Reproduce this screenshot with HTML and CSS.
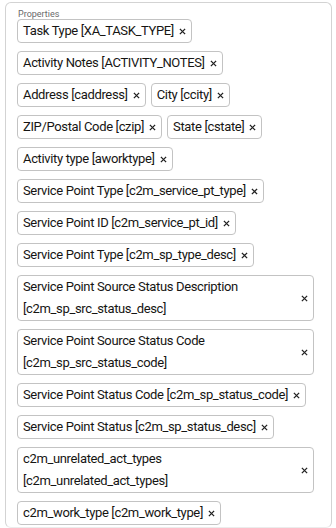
FILE: index.html
```html
<!DOCTYPE html>
<html lang="en">
<head>
<meta charset="utf-8">
<title>Properties</title>
<link rel="stylesheet" href="styles.css">
</head>
<body>
<div class="panel">
  <div class="label">Properties</div>
  <ul class="chips">
    <li class="chip"><span class="chip-text">Task Type [XA_TASK_TYPE]</span><svg class="x" viewBox="0 0 8 8"><path d="M1 1L7 7M7 1L1 7"/></svg></li>
    <li class="chip"><span class="chip-text">Activity Notes [ACTIVITY_NOTES]</span><svg class="x" viewBox="0 0 8 8"><path d="M1 1L7 7M7 1L1 7"/></svg></li>
    <li class="chip"><span class="chip-text">Address [caddress]</span><svg class="x" viewBox="0 0 8 8"><path d="M1 1L7 7M7 1L1 7"/></svg></li>
    <li class="chip"><span class="chip-text">City [ccity]</span><svg class="x" viewBox="0 0 8 8"><path d="M1 1L7 7M7 1L1 7"/></svg></li>
    <li class="chip"><span class="chip-text">ZIP/Postal Code [czip]</span><svg class="x" viewBox="0 0 8 8"><path d="M1 1L7 7M7 1L1 7"/></svg></li>
    <li class="chip"><span class="chip-text">State [cstate]</span><svg class="x" viewBox="0 0 8 8"><path d="M1 1L7 7M7 1L1 7"/></svg></li>
    <li class="chip"><span class="chip-text">Activity type [aworktype]</span><svg class="x" viewBox="0 0 8 8"><path d="M1 1L7 7M7 1L1 7"/></svg></li>
    <li class="chip"><span class="chip-text">Service Point Type [c2m_service_pt_type]</span><svg class="x" viewBox="0 0 8 8"><path d="M1 1L7 7M7 1L1 7"/></svg></li>
    <li class="chip"><span class="chip-text">Service Point ID [c2m_service_pt_id]</span><svg class="x" viewBox="0 0 8 8"><path d="M1 1L7 7M7 1L1 7"/></svg></li>
    <li class="chip"><span class="chip-text">Service Point Type [c2m_sp_type_desc]</span><svg class="x" viewBox="0 0 8 8"><path d="M1 1L7 7M7 1L1 7"/></svg></li>
    <li class="chip"><span class="chip-text">Service Point Source Status Description [c2m_sp_src_status_desc]</span><svg class="x" viewBox="0 0 8 8"><path d="M1 1L7 7M7 1L1 7"/></svg></li>
    <li class="chip"><span class="chip-text">Service Point Source Status Code [c2m_sp_src_status_code]</span><svg class="x" viewBox="0 0 8 8"><path d="M1 1L7 7M7 1L1 7"/></svg></li>
    <li class="chip"><span class="chip-text">Service Point Status Code [c2m_sp_status_code]</span><svg class="x" viewBox="0 0 8 8"><path d="M1 1L7 7M7 1L1 7"/></svg></li>
    <li class="chip"><span class="chip-text">Service Point Status [c2m_sp_status_desc]</span><svg class="x" viewBox="0 0 8 8"><path d="M1 1L7 7M7 1L1 7"/></svg></li>
    <li class="chip"><span class="chip-text">c2m_unrelated_act_types [c2m_unrelated_act_types]</span><svg class="x" viewBox="0 0 8 8"><path d="M1 1L7 7M7 1L1 7"/></svg></li>
    <li class="chip"><span class="chip-text">c2m_work_type [c2m_work_type]</span><svg class="x" viewBox="0 0 8 8"><path d="M1 1L7 7M7 1L1 7"/></svg></li>
  </ul>
</div>
</body>
</html>
```
FILE: styles.css
```css
html, body {
  margin: 0;
  padding: 0;
  background: #fff;
}
body {
  font-family: Roboto, "Noto Sans", sans-serif;
  color: #161513;
}
.panel {
  box-sizing: border-box;
  margin: 2px 0 0 5px;
  width: 327px;
  height: 526px;
  overflow: hidden;
  border: 1px solid #d3d3d3;
  border-bottom-color: #ececec;
  border-radius: 6px;
  padding: 6px 17px 0 11px;
}
.label {
  font-size: 9px;
  line-height: 10px;
  color: #6a6a6a;
  padding-left: 1px;
}
.chips {
  list-style: none;
  margin: 0;
  padding: 0;
  display: flex;
  flex-wrap: wrap;
  column-gap: 5px;
  row-gap: 8px;
}
.chip {
  box-sizing: border-box;
  max-width: 100%;
  display: inline-flex;
  align-items: center;
  gap: 5px;
  border: 1px solid #c3c3c3;
  border-radius: 4px;
  padding: 0 5px;
  background: #fff;
  font-size: 13px;
  letter-spacing: -0.35px;
  line-height: 22px;
}
.chip-text {
  flex: 1 1 auto;
  min-width: 0;
}
.x {
  flex: none;
  width: 7px;
  height: 7px;
  stroke: #222;
  stroke-width: 1.5;
  fill: none;
}
```
